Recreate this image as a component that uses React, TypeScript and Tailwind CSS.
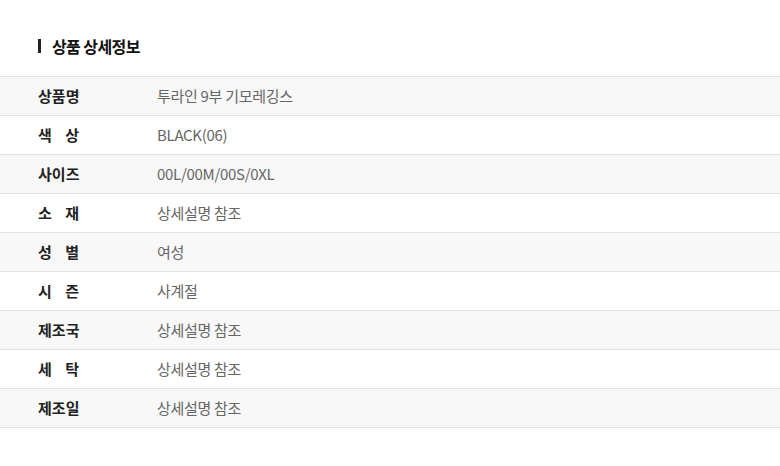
const rows: { label: string; value: string }[] = [
  { label: "상품명", value: "투라인 9부 기모레깅스" },
  { label: "색상", value: "BLACK(06)" },
  { label: "사이즈", value: "00L/00M/00S/0XL" },
  { label: "소재", value: "상세설명 참조" },
  { label: "성별", value: "여성" },
  { label: "시즌", value: "사계절" },
  { label: "제조국", value: "상세설명 참조" },
  { label: "세탁", value: "상세설명 참조" },
  { label: "제조일", value: "상세설명 참조" },
];

export default function App() {
  return (
    <div
      className="h-[466px] w-[780px] bg-white"
      style={{ fontFamily: '"Noto Sans CJK KR", "Noto Sans", sans-serif' }}
    >
      <div className="flex h-[76px] items-center pt-[16px] pl-[38px]">
        <span className="mr-[11px] h-[14px] w-[3px] bg-[#222]" />
        <h2 className="text-[16px] font-bold tracking-[-0.6px] text-[#111]">상품 상세정보</h2>
      </div>
      <div className="border-t border-[#e2e2e2]">
        {rows.map((row, i) => (
          <div
            key={row.label + i}
            className={`flex h-[39px] items-center border-b border-[#e2e2e2] ${i % 2 === 0 ? "bg-[#f8f8f8]" : "bg-white"}`}
          >
            <div className="ml-[38px] flex w-[41px] justify-between text-[15px] font-bold text-[#222]">
              {row.label.split("").map((ch, j) => (
                <span key={j}>{ch}</span>
              ))}
            </div>
            <div className="ml-[78px] text-[15px] tracking-[-0.3px] text-[#666]">{row.value}</div>
          </div>
        ))}
      </div>
    </div>
  );
}
